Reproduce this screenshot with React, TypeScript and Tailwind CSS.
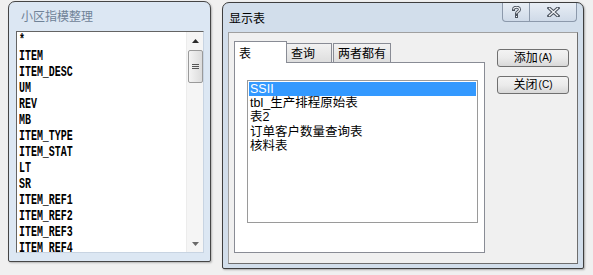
import React from 'react';

const FIELDS = [
  '*', 'ITEM', 'ITEM_DESC', 'UM', 'REV', 'MB', 'ITEM_TYPE', 'ITEM_STAT',
  'LT', 'SR', 'ITEM_REF1', 'ITEM_REF2', 'ITEM_REF3', 'ITEM_REF4',
];

const TABLES = ['SSII', 'tbl_生产排程原始表', '表2', '订单客户数量查询表', '核料表'];

const cjk = "font-['Liberation_Sans','Noto_Sans_CJK_SC',sans-serif]";

const FieldList: React.FC = () => (
  <div className="w-[203px] h-[261px] mt-[1px] ml-[8px] border border-[#464646] rounded-t-[7px] rounded-b-[2px] bg-[#dce7f3] flex flex-col shadow-[1px_1px_2px_rgba(0,0,0,0.25)]">
    <div className={`h-[29px] pl-[12px] flex items-center text-[12px] text-[#6f8297] ${cjk}`}>小区指模整理</div>
    <div className="ml-[7px] mr-[6px] h-[222px] bg-white border border-[#646464] border-r-[#c8d4e2] border-b-[#c8d4e2] flex overflow-hidden">
      <div className="flex-1 pl-[2px] overflow-hidden">
        <div className="origin-left scale-x-[0.71] w-[220px]">
          {FIELDS.map((f) => (
            <div key={f} className="h-[16px] flex items-center font-['Liberation_Mono',monospace] font-bold text-[14px] text-black leading-none whitespace-nowrap">
              {f}
            </div>
          ))}
        </div>
      </div>
      {/* scrollbar */}
      <div className="w-[17px] bg-[#f5f5f5] border-l border-[#ececec] flex flex-col items-center">
        <div className="h-[18px] flex items-center justify-center">
          <svg width="7" height="4" viewBox="0 0 7 4"><path d="M3.5 0 L7 4 L0 4 Z" fill="#2a2a2a" /></svg>
        </div>
        <div className="w-[15px] h-[33px] rounded-[2px] border border-[#9a9a9a] bg-gradient-to-r from-[#f4f4f4] to-[#dcdcdc] flex flex-col items-center justify-center gap-[1px]">
          <div className="w-[7px] h-[1px] bg-[#555]" />
          <div className="w-[7px] h-[1px] bg-[#555]" />
          <div className="w-[7px] h-[1px] bg-[#555]" />
        </div>
        <div className="flex-1" />
        <div className="h-[17px] flex items-center justify-center">
          <svg width="7" height="4" viewBox="0 0 7 4"><path d="M0 0 L7 0 L3.5 4 Z" fill="#6a6a6a" /></svg>
        </div>
      </div>
    </div>
  </div>
);

const TitleButtons: React.FC = () => (
  <div className="flex self-start mr-[6px] h-[19px] border border-t-0 border-[#8c99ab] rounded-b-[4px] overflow-hidden bg-gradient-to-b from-[#e8eef5] to-[#cfdae8]">
    <div className="w-[27px] flex items-center justify-center border-r border-[#8c99ab]">
      <svg width="9" height="12" viewBox="0 0 9 12">
        <path d="M1.5 3.5 C1.5 0.5 7.5 0.5 7.5 3.5 C7.5 5.5 4.5 5.5 4.5 7.5" fill="none" stroke="#4d5560" strokeWidth="3" strokeLinecap="square" />
        <path d="M1.5 3.5 C1.5 0.5 7.5 0.5 7.5 3.5 C7.5 5.5 4.5 5.5 4.5 7.5" fill="none" stroke="#f4f6f9" strokeWidth="1.2" />
        <rect x="3" y="9" width="3" height="3" fill="#4d5560" />
        <rect x="4" y="10" width="1" height="1" fill="#f4f6f9" />
      </svg>
    </div>
    <div className="w-[46px] flex items-center justify-center">
      <svg width="13" height="10" viewBox="0 0 13 10">
        <path d="M2 1 L11 9 M11 1 L2 9" stroke="#4d5560" strokeWidth="3.4" strokeLinecap="square" />
        <path d="M2 1 L11 9 M11 1 L2 9" stroke="#f4f6f9" strokeWidth="1.2" />
      </svg>
    </div>
  </div>
);

const Button: React.FC<{ label: string; hot: string }> = ({ label, hot }) => (
  <button className={`w-[72px] h-[18px] rounded-[3px] border border-[#707070] bg-gradient-to-b from-[#f3f3f3] via-[#ebebeb] to-[#d8d8d8] flex items-center justify-center text-[12px] text-black leading-none ${cjk}`}>
    {label}<span className="text-[10px] ml-[1px]">({hot})</span>
  </button>
);

const ShowTable: React.FC = () => (
  <div className="w-[362px] h-[267px] mt-[2px] ml-[11px] border border-[#3e3e3e] rounded-t-[7px] rounded-b-[2px] bg-[#d2deeb] flex flex-col shadow-[1px_1px_2px_rgba(0,0,0,0.3)]">
    <div className="h-[29px] flex justify-between">
      <div className={`pl-[6px] pt-[7px] text-[12px] text-black ${cjk}`}>显示表</div>
      <TitleButtons />
    </div>
    <div className="mx-[5px] h-[232px] border border-[#a0a0a0] border-r-[#6e6e6e] border-b-[#6e6e6e] bg-[#f0f0f0] flex pl-[5px] pt-[8px]">
      <div className="w-[251px] flex flex-col">
        <div className={`flex items-end h-[21px] text-[12px] text-black ${cjk}`}>
          <div className="w-[53px] h-[22px] -mb-px z-10 bg-white border border-b-0 border-[#898c95] pl-[4px] pt-[3px]">表</div>
          <div className="w-[46px] h-[19px] -ml-px border border-b-0 border-[#898c95] bg-gradient-to-b from-[#f2f2f2] to-[#dedede] pl-[4px] pt-[1px]">查询</div>
          <div className="w-[58px] h-[19px] ml-[1px] border border-b-0 border-[#898c95] bg-gradient-to-b from-[#f2f2f2] to-[#dedede] pl-[4px] pt-[1px]">两者都有</div>
        </div>
        <div className="h-[191px] bg-white border border-[#898c95] pl-[12px] pt-[17px]">
          <div className="w-[231px] h-[143px] border border-[#9a9a9a] p-[1px]">
            {TABLES.map((t, i) => (
              <div
                key={t}
                className={`h-[14.3px] flex items-center pl-[1px] text-[12.5px] leading-none whitespace-nowrap ${cjk} ${i === 0 ? 'bg-[#3399ff] text-white' : 'text-black'}`}
              >
                {t}
              </div>
            ))}
          </div>
        </div>
      </div>
      <div className="ml-[12px] pt-[8px] flex flex-col gap-[9px]">
        <Button label="添加" hot="A" />
        <Button label="关闭" hot="C" />
      </div>
    </div>
  </div>
);

export default function App() {
  return (
    <div className="w-[593px] h-[275px] bg-[#f0f0f0] flex items-start overflow-hidden">
      <FieldList />
      <ShowTable />
    </div>
  );
}
